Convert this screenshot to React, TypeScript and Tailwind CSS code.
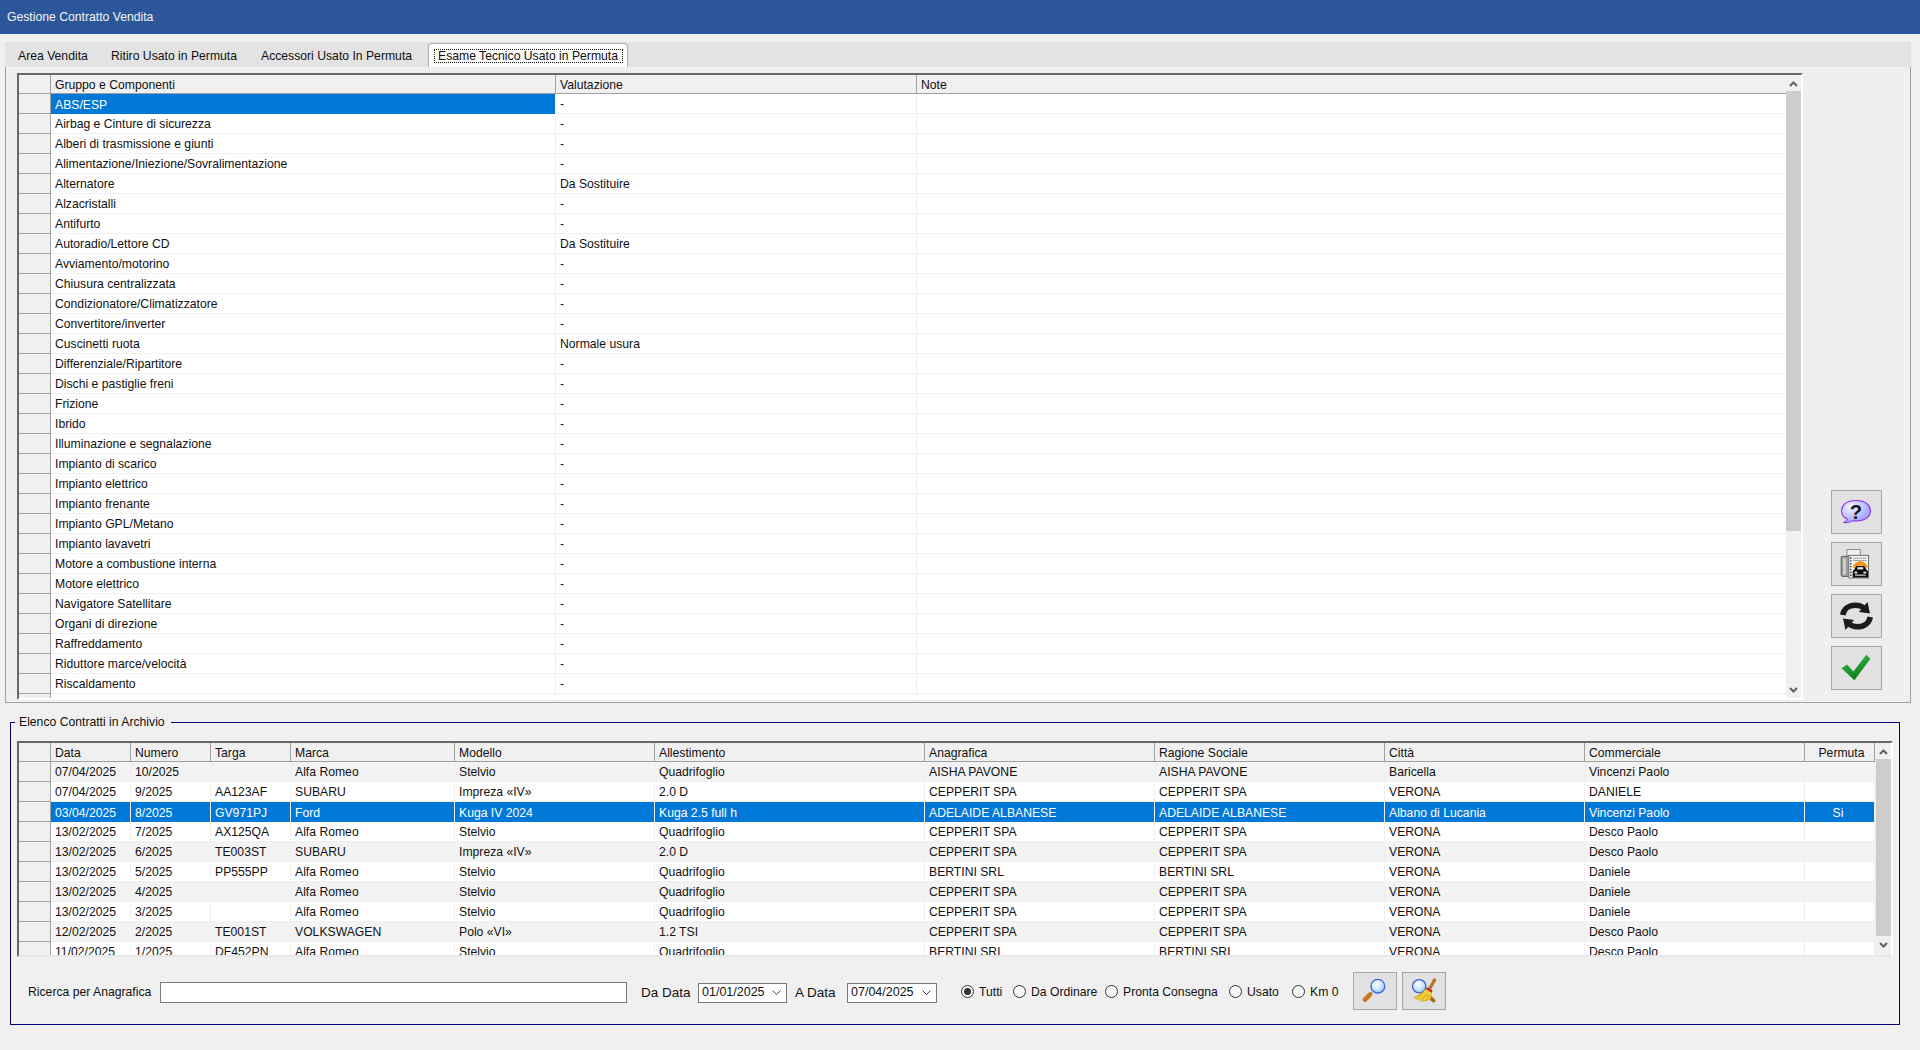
import React from "react";

const comps: [string, string][] = [
  ["ABS/ESP", "-"], ["Airbag e Cinture di sicurezza", "-"], ["Alberi di trasmissione e giunti", "-"],
  ["Alimentazione/Iniezione/Sovralimentazione", "-"], ["Alternatore", "Da Sostituire"], ["Alzacristalli", "-"],
  ["Antifurto", "-"], ["Autoradio/Lettore CD", "Da Sostituire"], ["Avviamento/motorino", "-"],
  ["Chiusura centralizzata", "-"], ["Condizionatore/Climatizzatore", "-"], ["Convertitore/inverter", "-"],
  ["Cuscinetti ruota", "Normale usura"], ["Differenziale/Ripartitore", "-"], ["Dischi e pastiglie freni", "-"],
  ["Frizione", "-"], ["Ibrido", "-"], ["Illuminazione e segnalazione", "-"], ["Impianto di scarico", "-"],
  ["Impianto elettrico", "-"], ["Impianto frenante", "-"], ["Impianto GPL/Metano", "-"], ["Impianto lavavetri", "-"],
  ["Motore a combustione interna", "-"], ["Motore elettrico", "-"], ["Navigatore Satellitare", "-"],
  ["Organi di direzione", "-"], ["Raffreddamento", "-"], ["Riduttore marce/velocità", "-"], ["Riscaldamento", "-"], ["", ""],
];

const contractCols = [
  { t: "Data", w: "w-[80px]" }, { t: "Numero", w: "w-[80px]" }, { t: "Targa", w: "w-[80px]" },
  { t: "Marca", w: "w-[164px]" }, { t: "Modello", w: "w-[200px]" }, { t: "Allestimento", w: "w-[270px]" },
  { t: "Anagrafica", w: "w-[230px]" }, { t: "Ragione Sociale", w: "w-[230px]" }, { t: "Città", w: "w-[200px]" },
  { t: "Commerciale", w: "w-[220px]" }, { t: "Permuta", w: "w-[70px]" },
];

const contracts: string[][] = [
  ["07/04/2025", "10/2025", "", "Alfa Romeo", "Stelvio", "Quadrifoglio", "AISHA PAVONE", "AISHA PAVONE", "Baricella", "Vincenzi Paolo", ""],
  ["07/04/2025", "9/2025", "AA123AF", "SUBARU", "Impreza «IV»", "2.0 D", "CEPPERIT SPA", "CEPPERIT SPA", "VERONA", "DANIELE", ""],
  ["03/04/2025", "8/2025", "GV971PJ", "Ford", "Kuga IV 2024", "Kuga 2.5 full h", "ADELAIDE ALBANESE", "ADELAIDE ALBANESE", "Albano di Lucania", "Vincenzi Paolo", "Si"],
  ["13/02/2025", "7/2025", "AX125QA", "Alfa Romeo", "Stelvio", "Quadrifoglio", "CEPPERIT SPA", "CEPPERIT SPA", "VERONA", "Desco Paolo", ""],
  ["13/02/2025", "6/2025", "TE003ST", "SUBARU", "Impreza «IV»", "2.0 D", "CEPPERIT SPA", "CEPPERIT SPA", "VERONA", "Desco Paolo", ""],
  ["13/02/2025", "5/2025", "PP555PP", "Alfa Romeo", "Stelvio", "Quadrifoglio", "BERTINI SRL", "BERTINI SRL", "VERONA", "Daniele", ""],
  ["13/02/2025", "4/2025", "", "Alfa Romeo", "Stelvio", "Quadrifoglio", "CEPPERIT SPA", "CEPPERIT SPA", "VERONA", "Daniele", ""],
  ["13/02/2025", "3/2025", "", "Alfa Romeo", "Stelvio", "Quadrifoglio", "CEPPERIT SPA", "CEPPERIT SPA", "VERONA", "Daniele", ""],
  ["12/02/2025", "2/2025", "TE001ST", "VOLKSWAGEN", "Polo «VI»", "1.2 TSI", "CEPPERIT SPA", "CEPPERIT SPA", "VERONA", "Desco Paolo", ""],
  ["11/02/2025", "1/2025", "DF452PN", "Alfa Romeo", "Stelvio", "Quadrifoglio", "BERTINI SRL", "BERTINI SRL", "VERONA", "Desco Paolo", ""],
];

function Chevron({ up }: { up?: boolean }) {
  return (
    <svg width="9" height="7" viewBox="0 0 9 7" className="block">
      <path d={up ? "M1 6 L4.5 2.5 L8 6" : "M1 1 L4.5 4.5 L8 1"} fill="none" stroke="#606060" strokeWidth="2" />
    </svg>
  );
}

function ScrollBar({ thumb, bottomArrow }: { thumb: string; bottomArrow: string }) {
  return (
    <div className="w-[15px] shrink-0 bg-[#f0f0f0] flex flex-col">
      <div className="h-[16px] flex items-center justify-center shrink-0"><Chevron up /></div>
      <div className={`bg-[#cdcdcd] shrink-0 ${thumb}`} />
      <div className="flex-1" />
      <div className={`flex items-center justify-center shrink-0 ${bottomArrow}`}><Chevron /></div>
    </div>
  );
}

function HeadCell({ w, children, center }: { w: string; children: React.ReactNode; center?: boolean }) {
  return (
    <div className={`${w} shrink-0 h-full border-r border-[#a0a0a0] flex items-center pt-[2px] whitespace-nowrap ${center ? "justify-center pl-[4px]" : "pl-[4px]"}`}>
      {children}
    </div>
  );
}

function Selector() {
  return <div className="w-[32px] shrink-0 h-full bg-[#f0f0f0] border-r border-b border-[#a0a0a0]" />;
}

function Cell({ w, children, center }: { w: string; children?: React.ReactNode; center?: boolean }) {
  return (
    <div className={`${w} shrink-0 h-full border-r border-[#f0f0f0] pt-[2px] flex items-center whitespace-nowrap overflow-hidden ${center ? "justify-center pr-[3px]" : "pl-[4px]"}`}>
      {children}
    </div>
  );
}

function ToolButton({ children, w = "w-[51px]", h = "h-[44px]" }: { children: React.ReactNode; w?: string; h?: string }) {
  return (
    <div className={`${w} ${h} bg-[#e1e1e1] border border-[#a6a6a6] flex items-center justify-center shrink-0`}>
      {children}
    </div>
  );
}

function HelpIcon() {
  return (
    <svg width="51" height="44" viewBox="0 0 51 44">
      <defs>
        <radialGradient id="hg" cx="32%" cy="28%" r="85%">
          <stop offset="0" stopColor="#f4f4ff" />
          <stop offset="0.5" stopColor="#c4c6ff" />
          <stop offset="1" stopColor="#8f90f4" />
        </radialGradient>
      </defs>
      <path d="M25 10 C15.5 10 10 14.5 10 21 C10 25 12.5 28 16 29.5 C15.5 31.2 14 32.3 12 33 C16 33.5 19.5 32.5 22 31 C23 31.2 24 31.3 25 31.3 C34.5 31.3 40 27 40 21 C40 14.5 34.5 10 25 10 Z" fill="url(#hg)" stroke="#8a2be2" strokeWidth="1.1" />
      <text x="25" y="29" textAnchor="middle" fontFamily="'Liberation Sans', sans-serif" fontWeight="700" fontSize="21" fill="#151515">?</text>
    </svg>
  );
}

function PrintIcon() {
  return (
    <svg width="51" height="44" viewBox="0 0 51 44">
      <rect x="15.5" y="7" width="14" height="8" fill="#f0f0f0" stroke="#8a8a8a" />
      <rect x="9.5" y="14" width="9" height="21" rx="1.5" fill="#9a9a9a" stroke="#5f5f5f" />
      <rect x="11.5" y="16" width="3" height="17" fill="#cfcfcf" />
      <rect x="17.5" y="13" width="20.5" height="23.5" fill="#f4f4f4" stroke="#6a6a6a" />
      <path d="M19.5 15 V35" stroke="#444" strokeWidth="1.6" strokeDasharray="1.5 1.5" />
      <path d="M22 16 H36 M22 18.5 H36" stroke="#8e8e8e" strokeWidth="0.9" />
      <path d="M21.5 25.5 C24.5 17.5 33.5 16.5 38 25.5 L34.5 26 C32.5 22.5 27 22.5 25 26.5 Z" fill="#f5921e" />
      <path d="M23 28 L25.5 24 H33.5 L36 28 L37.5 29.5 V36 H21.5 V29.5 Z" fill="#0c0c0c" />
      <rect x="26.5" y="25.3" width="6" height="2.4" fill="#dfe6ea" />
      <rect x="23.3" y="30" width="3" height="1.8" fill="#f4f4f4" />
      <rect x="32.7" y="30" width="3" height="1.8" fill="#f4f4f4" />
      <rect x="24" y="33" width="11" height="1.1" fill="#f4f4f4" />
    </svg>
  );
}

function RefreshIcon() {
  return (
    <svg width="51" height="44" viewBox="0 0 51 44">
      <path d="M11.2 21 C12.2 15 17 10.8 24.5 10.8 C29 10.8 32 12.2 34.5 14.8" fill="none" stroke="#1c1c1c" strokeWidth="5.8" />
      <path d="M37 7.5 L39.5 19.5 L28 17.8 Z" fill="#1c1c1c" />
      <path d="M39.8 23 C38.8 29 34 33.2 26.5 33.2 C22 33.2 19 31.8 16.5 29.2" fill="none" stroke="#1c1c1c" strokeWidth="5.8" />
      <path d="M14 36.5 L11.5 24.5 L23 26.2 Z" fill="#1c1c1c" />
    </svg>
  );
}

function CheckIcon() {
  return (
    <svg width="51" height="44" viewBox="0 0 51 44">
      <defs>
        <linearGradient id="cg" x1="0" y1="0" x2="0.4" y2="1">
          <stop offset="0" stopColor="#3fb84a" />
          <stop offset="1" stopColor="#0e7f1c" />
        </linearGradient>
      </defs>
      <path d="M10 22.3 L15.7 18.3 L22.3 25.7 L35.7 8.3 L40 12.3 L23.3 34.7 Z" fill="url(#cg)" />
    </svg>
  );
}

function Lens({ cx, cy, r, id }: { cx: number; cy: number; r: number; id: string }) {
  return (
    <>
      <defs>
        <radialGradient id={id} cx="40%" cy="35%" r="75%">
          <stop offset="0" stopColor="#ffffff" />
          <stop offset="0.6" stopColor="#bfe0ff" />
          <stop offset="1" stopColor="#7fb8f5" />
        </radialGradient>
      </defs>
      <circle cx={cx} cy={cy} r={r} fill={`url(#${id})`} stroke="#3f63d6" strokeWidth="1.4" />
    </>
  );
}

function SearchIcon() {
  return (
    <svg width="44" height="38" viewBox="0 0 44 38">
      <path d="M19 20.5 L11.5 28" stroke="#8a8f98" strokeWidth="2.5" />
      <path d="M16.5 23 L11.5 28" stroke="#c9781f" strokeWidth="5" strokeLinecap="round" />
      <Lens cx={25} cy={14} r={7.2} id="l1" />
    </svg>
  );
}

function BroomIcon() {
  return (
    <svg width="44" height="38" viewBox="0 0 44 38">
      <path d="M22 20 L32 29" stroke="#a5692a" strokeWidth="4" strokeLinecap="round" />
      <Lens cx={17} cy={14} r={7} id="l2" />
      <path d="M33 7.5 L27.5 17.5" stroke="#b5752c" strokeWidth="3.5" strokeLinecap="round" />
      <path d="M24.5 16.5 L30 20 L29 27.5 L21.5 30 L11 26 Q19 23 24.5 16.5 Z" fill="#f4cf3a" stroke="#c79a1a" strokeWidth="0.6" />
      <path d="M22 20 L15 26.5 M25 22 L19 28.5 M27.5 23.5 L24 29" stroke="#b98e16" strokeWidth="0.8" />
      <path d="M24.5 16 L30.5 19.5" stroke="#c8202a" strokeWidth="2.2" />
    </svg>
  );
}

function DateBox({ value, w }: { value: string; w: string }) {
  return (
    <div className={`${w} h-[20px] mt-[3px] bg-white border border-[#7a7a7a] flex items-center justify-between pl-[3px] pr-[5px] text-[12.5px] shrink-0`}>
      <span>{value}</span>
      <svg width="9" height="6" viewBox="0 0 9 6"><path d="M0.5 0.5 L4.5 4.5 L8.5 0.5" fill="none" stroke="#444" strokeWidth="1" /></svg>
    </div>
  );
}

function Radio({ label, w, checked }: { label: string; w: string; checked?: boolean }) {
  return (
    <div className={`${w} shrink-0 flex items-center whitespace-nowrap`}>
      <div className="w-[13px] h-[13px] rounded-full border border-[#333] bg-[#f8f8f8] flex items-center justify-center shrink-0">
        {checked && <div className="w-[7px] h-[7px] rounded-full bg-[#333]" />}
      </div>
      <span className="ml-[5px]">{label}</span>
    </div>
  );
}

export default function App() {
  return (
    <div className="w-[1920px] h-[1050px] bg-[#f0f0f0] flex flex-col overflow-hidden text-[12.2px] text-[#111] font-['Liberation_Sans',Arial,sans-serif]">
      <div className="h-[34px] shrink-0 bg-[#2b579a] text-[#f4f4f4] pl-[7px] flex items-center">Gestione Contratto Vendita</div>

      {/* Tabs */}
      <div className="mt-[8px] ml-[5px] w-[1906px] shrink-0 flex flex-col">
        <div className="h-[25px] bg-[#e3e3e3] flex items-end relative z-10 -mb-px">
          <div className="w-[93px] h-[23px] pl-[13px] pt-[2px] flex items-center">Area Vendita</div>
          <div className="w-[150px] h-[23px] pl-[13px] pt-[2px] flex items-center">Ritiro Usato in Permuta</div>
          <div className="w-[180px] h-[23px] pl-[13px] pt-[2px] flex items-center">Accessori Usato In Permuta</div>
          <div className="w-[200px] h-[24px] bg-[#fbfbfb] border border-b-0 border-[#b0b0b0] rounded-t-[4px] flex items-center justify-center">
            <div className="w-[189px] h-[14px] border border-dotted border-[#111] pt-px flex items-center justify-center leading-none whitespace-nowrap">Esame Tecnico Usato in Permuta</div>
          </div>
        </div>
        <div className="h-[637px] border border-[#a0a0a0] bg-[#efefef] flex pl-[11px] pt-[6px]">
          {/* Upper grid */}
          <div className="w-[1786px] h-[627px] shrink-0 bg-[#f0f0f0] border-l-2 border-t-2 border-l-[#696969] border-t-[#696969] border-r-2 border-b-2 border-r-white border-b-white flex overflow-hidden">
            <div className="flex-1 flex flex-col overflow-hidden">
              <div className="h-[19px] shrink-0 flex border-b border-[#a0a0a0] bg-[#f0f0f0]">
                <div className="w-[32px] shrink-0 h-full border-r border-[#a0a0a0]" />
                <HeadCell w="w-[505px]">Gruppo e Componenti</HeadCell>
                <HeadCell w="w-[361px]">Valutazione</HeadCell>
                <div className="flex-1 pl-[4px] pt-[2px] flex items-center">Note</div>
              </div>
              {comps.map((r, i) => (
                <div key={i} className="h-[20px] shrink-0 flex">
                  <Selector />
                  <div className={`w-[505px] shrink-0 h-full pl-[4px] pt-[2px] flex items-center border-r border-[#f0f0f0] ${i === 0 ? "bg-[#0078d7] text-white" : "bg-white border-b"}`}>{r[0]}</div>
                  <Cell w="w-[361px] bg-white border-b">{r[1]}</Cell>
                  <div className="flex-1 h-full bg-white border-b border-[#f0f0f0]" />
                </div>
              ))}
            </div>
            <ScrollBar thumb="h-[440px]" bottomArrow="h-[16px]" />
          </div>
          {/* Side buttons */}
          <div className="flex flex-col gap-[8px] self-end mb-[12px] ml-[28px]">
            <ToolButton><HelpIcon /></ToolButton>
            <ToolButton><PrintIcon /></ToolButton>
            <ToolButton><RefreshIcon /></ToolButton>
            <ToolButton><CheckIcon /></ToolButton>
          </div>
        </div>
      </div>

      {/* Archive */}
      <fieldset className="mt-[12px] ml-[10px] w-[1890px] h-[310px] shrink-0 border border-[#000080] flex flex-col">
        <legend className="ml-[4px] pl-[4px] pr-[6px] leading-[14px]">Elenco Contratti in Archivio</legend>
        <div className="mt-[12px] ml-[6px] w-[1876px] h-[216px] shrink-0 bg-[#f0f0f0] border-l-2 border-t-2 border-l-[#696969] border-t-[#696969] border-r-2 border-b-2 border-r-white border-b-[#e8e8e8] flex overflow-hidden">
          <div className="w-[1856px] shrink-0 flex flex-col overflow-hidden">
            <div className="h-[19px] shrink-0 flex border-b border-[#a0a0a0] bg-[#f0f0f0]">
              <div className="w-[32px] shrink-0 h-full border-r border-[#a0a0a0]" />
              {contractCols.map((c) => (
                <HeadCell key={c.t} w={c.w} center={c.t === "Permuta"}>{c.t}</HeadCell>
              ))}
            </div>
            {contracts.map((r, i) => (
              <div key={i} className={`h-[20px] shrink-0 flex ${i === 2 ? "bg-[#0078d7] text-white" : i % 2 === 0 ? "bg-[#f3f3f3]" : "bg-white"}`}>
                <Selector />
                {contractCols.map((c, j) => (
                  <Cell key={c.t} w={`${c.w} ${i === 2 ? "" : "border-b"}`} center={j === 10}>{r[j]}</Cell>
                ))}
              </div>
            ))}
          </div>
          <div className="flex-1 flex pl-px">
            <ScrollBar thumb="h-[177px]" bottomArrow="h-[19px]" />
          </div>
        </div>
        <div className="mt-[15px] h-[38px] shrink-0 flex items-center pl-[17px]">
          <span className="w-[132px] shrink-0 whitespace-nowrap mt-[2px]">Ricerca per Anagrafica</span>
          <div className="w-[467px] h-[21px] mt-[2px] bg-white border border-[#7a7a7a] shrink-0" />
          <span className="ml-[14px] w-[57px] shrink-0 text-[13.5px] whitespace-nowrap mt-[4px]">Da Data</span>
          <DateBox value="01/01/2025" w="w-[89px]" />
          <span className="ml-[8px] w-[52px] shrink-0 text-[13.5px] whitespace-nowrap mt-[4px]">A Data</span>
          <DateBox value="07/04/2025" w="w-[90px]" />
          <div className="ml-[24px] mt-[2px] flex items-center">
            <Radio label="Tutti" w="w-[52px]" checked />
            <Radio label="Da Ordinare" w="w-[92px]" />
            <Radio label="Pronta Consegna" w="w-[124px]" />
            <Radio label="Usato" w="w-[63px]" />
            <Radio label="Km 0" w="w-[61px]" />
          </div>
          <ToolButton w="w-[44px]" h="h-[38px]"><SearchIcon /></ToolButton>
          <div className="w-[5px] shrink-0" />
          <ToolButton w="w-[44px]" h="h-[38px]"><BroomIcon /></ToolButton>
        </div>
      </fieldset>
    </div>
  );
}
